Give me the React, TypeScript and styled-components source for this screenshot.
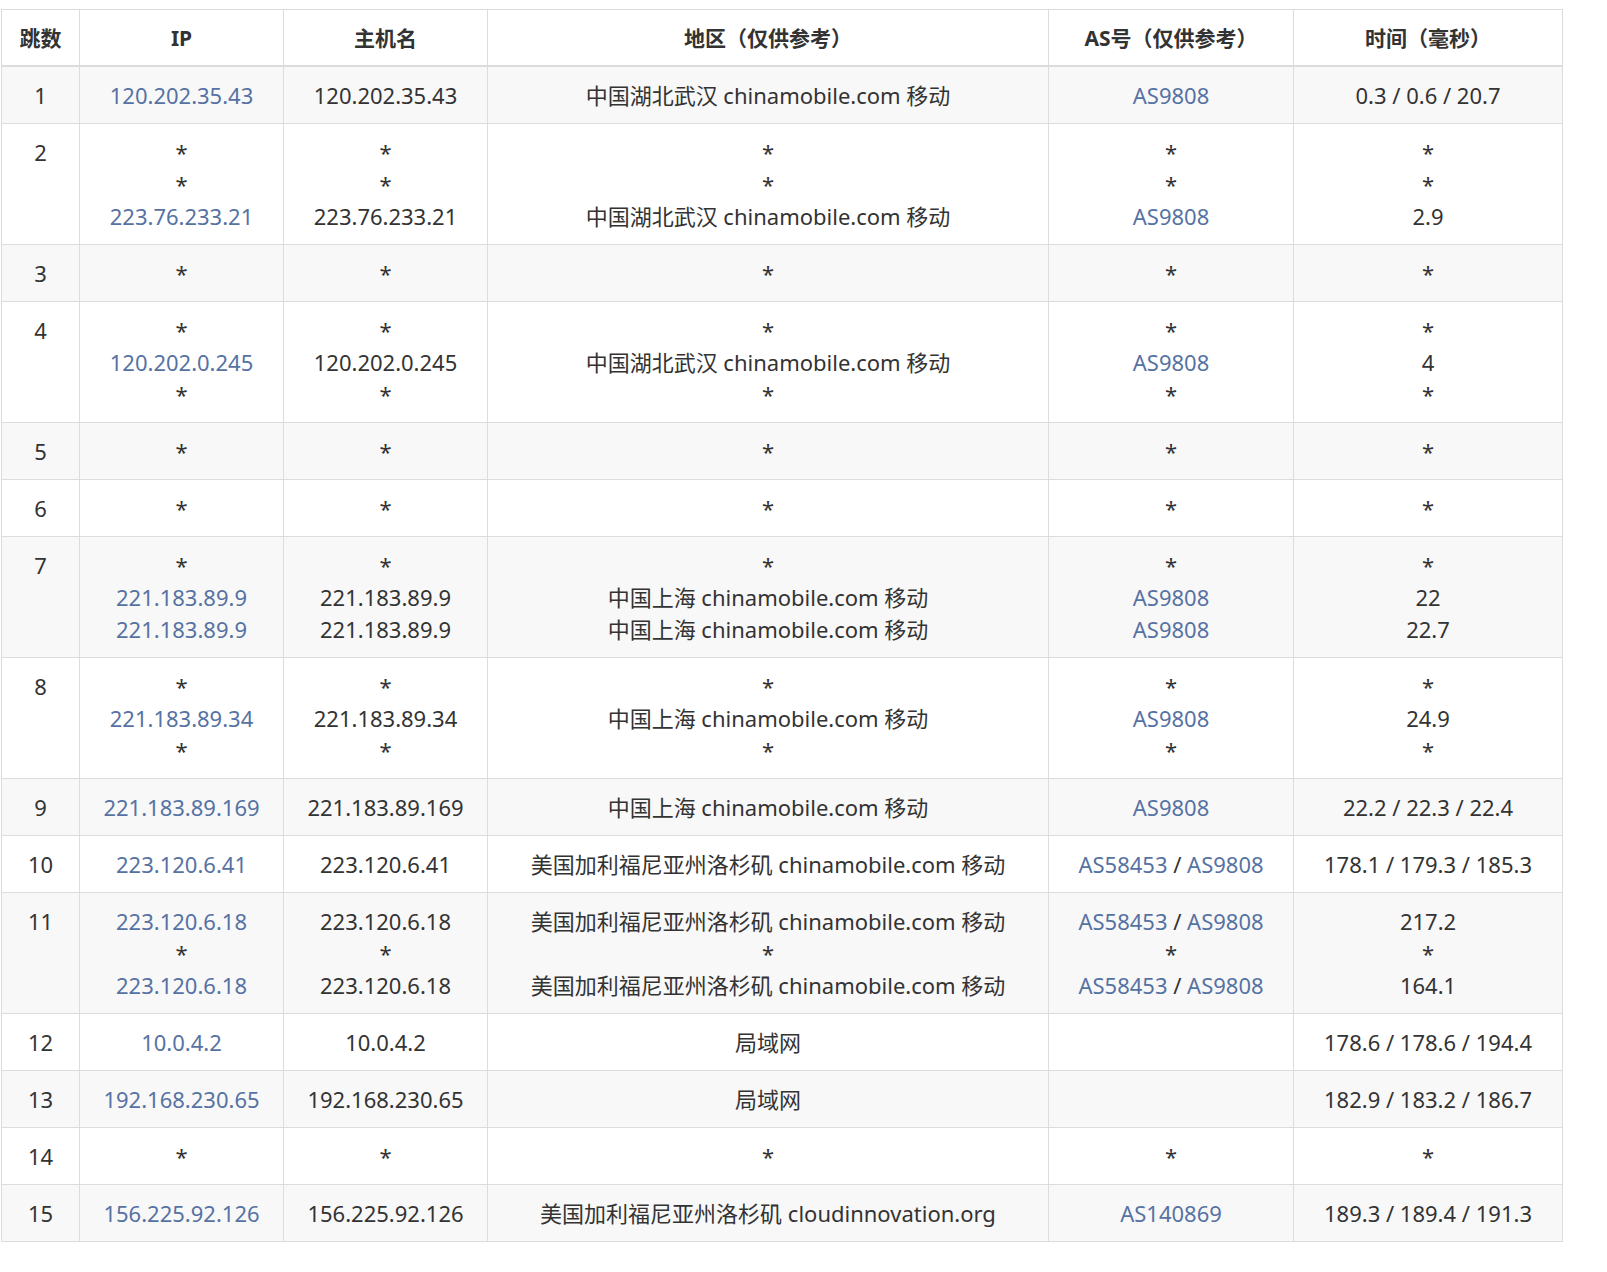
import React from "react";
import styled, { createGlobalStyle } from "styled-components";

const Global = createGlobalStyle`
  body { margin: 9px 0 0 1px; background: #fff; font-family: "Noto Sans", "Noto Sans CJK SC", sans-serif; color: #333; }
  th, td { box-sizing: border-box; }
`;

const Table = styled.table`
  border-collapse: collapse;
  width: 1561px;
  table-layout: fixed;
  font-size: 22px;
  line-height: 32px;
`;
const Th = styled.th<{ w: number }>`
  width: ${(p) => p.w}px;
  font-weight: 700;
  font-size: 21px;
  text-align: center;
  padding: 12px 4px 11px;
  border: 1px solid #dcdcdc;
  border-bottom: 2px solid #dcdcdc;
  color: #333;
`;
const Tr = styled.tr<{ odd: boolean }>`
  background: ${(p) => (p.odd ? "#f8f8f8" : "#fff")};
`;
const Td = styled.td`
  border: 1px solid #dcdcdc;
  text-align: center;
  vertical-align: top;
  padding: 12px 2px 12px;
  white-space: nowrap;
`;
const Line = styled.div``;
const Link = styled.span`
  color: #5672a3;
`;

type Row = { hop: number; ip: string[]; host: string[]; loc: string[]; as: string[]; t: string[] };

const S = "*";
const WH = "中国湖北武汉 chinamobile.com 移动";
const SH = "中国上海 chinamobile.com 移动";
const LA = "美国加利福尼亚州洛杉矶 chinamobile.com 移动";
const LAN = "局域网";
const DUAL = "AS58453 / AS9808";

const rows: Row[] = [
  { hop: 1, ip: ["120.202.35.43"], host: ["120.202.35.43"], loc: [WH], as: ["AS9808"], t: ["0.3 / 0.6 / 20.7"] },
  { hop: 2, ip: [S, S, "223.76.233.21"], host: [S, S, "223.76.233.21"], loc: [S, S, WH], as: [S, S, "AS9808"], t: [S, S, "2.9"] },
  { hop: 3, ip: [S], host: [S], loc: [S], as: [S], t: [S] },
  { hop: 4, ip: [S, "120.202.0.245", S], host: [S, "120.202.0.245", S], loc: [S, WH, S], as: [S, "AS9808", S], t: [S, "4", S] },
  { hop: 5, ip: [S], host: [S], loc: [S], as: [S], t: [S] },
  { hop: 6, ip: [S], host: [S], loc: [S], as: [S], t: [S] },
  { hop: 7, ip: [S, "221.183.89.9", "221.183.89.9"], host: [S, "221.183.89.9", "221.183.89.9"], loc: [S, SH, SH], as: [S, "AS9808", "AS9808"], t: [S, "22", "22.7"] },
  { hop: 8, ip: [S, "221.183.89.34", S], host: [S, "221.183.89.34", S], loc: [S, SH, S], as: [S, "AS9808", S], t: [S, "24.9", S] },
  { hop: 9, ip: ["221.183.89.169"], host: ["221.183.89.169"], loc: [SH], as: ["AS9808"], t: ["22.2 / 22.3 / 22.4"] },
  { hop: 10, ip: ["223.120.6.41"], host: ["223.120.6.41"], loc: [LA], as: [DUAL], t: ["178.1 / 179.3 / 185.3"] },
  { hop: 11, ip: ["223.120.6.18", S, "223.120.6.18"], host: ["223.120.6.18", S, "223.120.6.18"], loc: [LA, S, LA], as: [DUAL, S, DUAL], t: ["217.2", S, "164.1"] },
  { hop: 12, ip: ["10.0.4.2"], host: ["10.0.4.2"], loc: [LAN], as: [""], t: ["178.6 / 178.6 / 194.4"] },
  { hop: 13, ip: ["192.168.230.65"], host: ["192.168.230.65"], loc: [LAN], as: [""], t: ["182.9 / 183.2 / 186.7"] },
  { hop: 14, ip: [S], host: [S], loc: [S], as: [S], t: [S] },
  { hop: 15, ip: ["156.225.92.126"], host: ["156.225.92.126"], loc: ["美国加利福尼亚州洛杉矶 cloudinnovation.org"], as: ["AS140869"], t: ["189.3 / 189.4 / 191.3"] },
];

const Lines = ({ items, link }: { items: string[]; link?: boolean }) => (
  <>
    {items.map((s, i) => (
      <Line key={i}>
        {s === S || !link ? (
          s || "\u00a0"
        ) : s.includes(" / ") ? (
          <>
            {s.split(" / ").map((p, j) => (
              <React.Fragment key={j}>
                {j > 0 && " / "}
                <Link>{p}</Link>
              </React.Fragment>
            ))}
          </>
        ) : (
          <Link>{s}</Link>
        )}
      </Line>
    ))}
  </>
);

export default function App() {
  return (
    <>
      <Global />
      <Table>
        <thead>
          <tr>
            <Th w={78}>跳数</Th>
            <Th w={204}>IP</Th>
            <Th w={204}>主机名</Th>
            <Th w={561}>地区（仅供参考）</Th>
            <Th w={245}>AS号（仅供参考）</Th>
            <Th w={269}>时间（毫秒）</Th>
          </tr>
        </thead>
        <tbody>
          {rows.map((r, i) => (
            <Tr key={r.hop} odd={i % 2 === 0}>
              <Td>{r.hop}</Td>
              <Td><Lines items={r.ip} link /></Td>
              <Td><Lines items={r.host} /></Td>
              <Td><Lines items={r.loc} /></Td>
              <Td><Lines items={r.as} link /></Td>
              <Td><Lines items={r.t} /></Td>
            </Tr>
          ))}
        </tbody>
      </Table>
    </>
  );
}
